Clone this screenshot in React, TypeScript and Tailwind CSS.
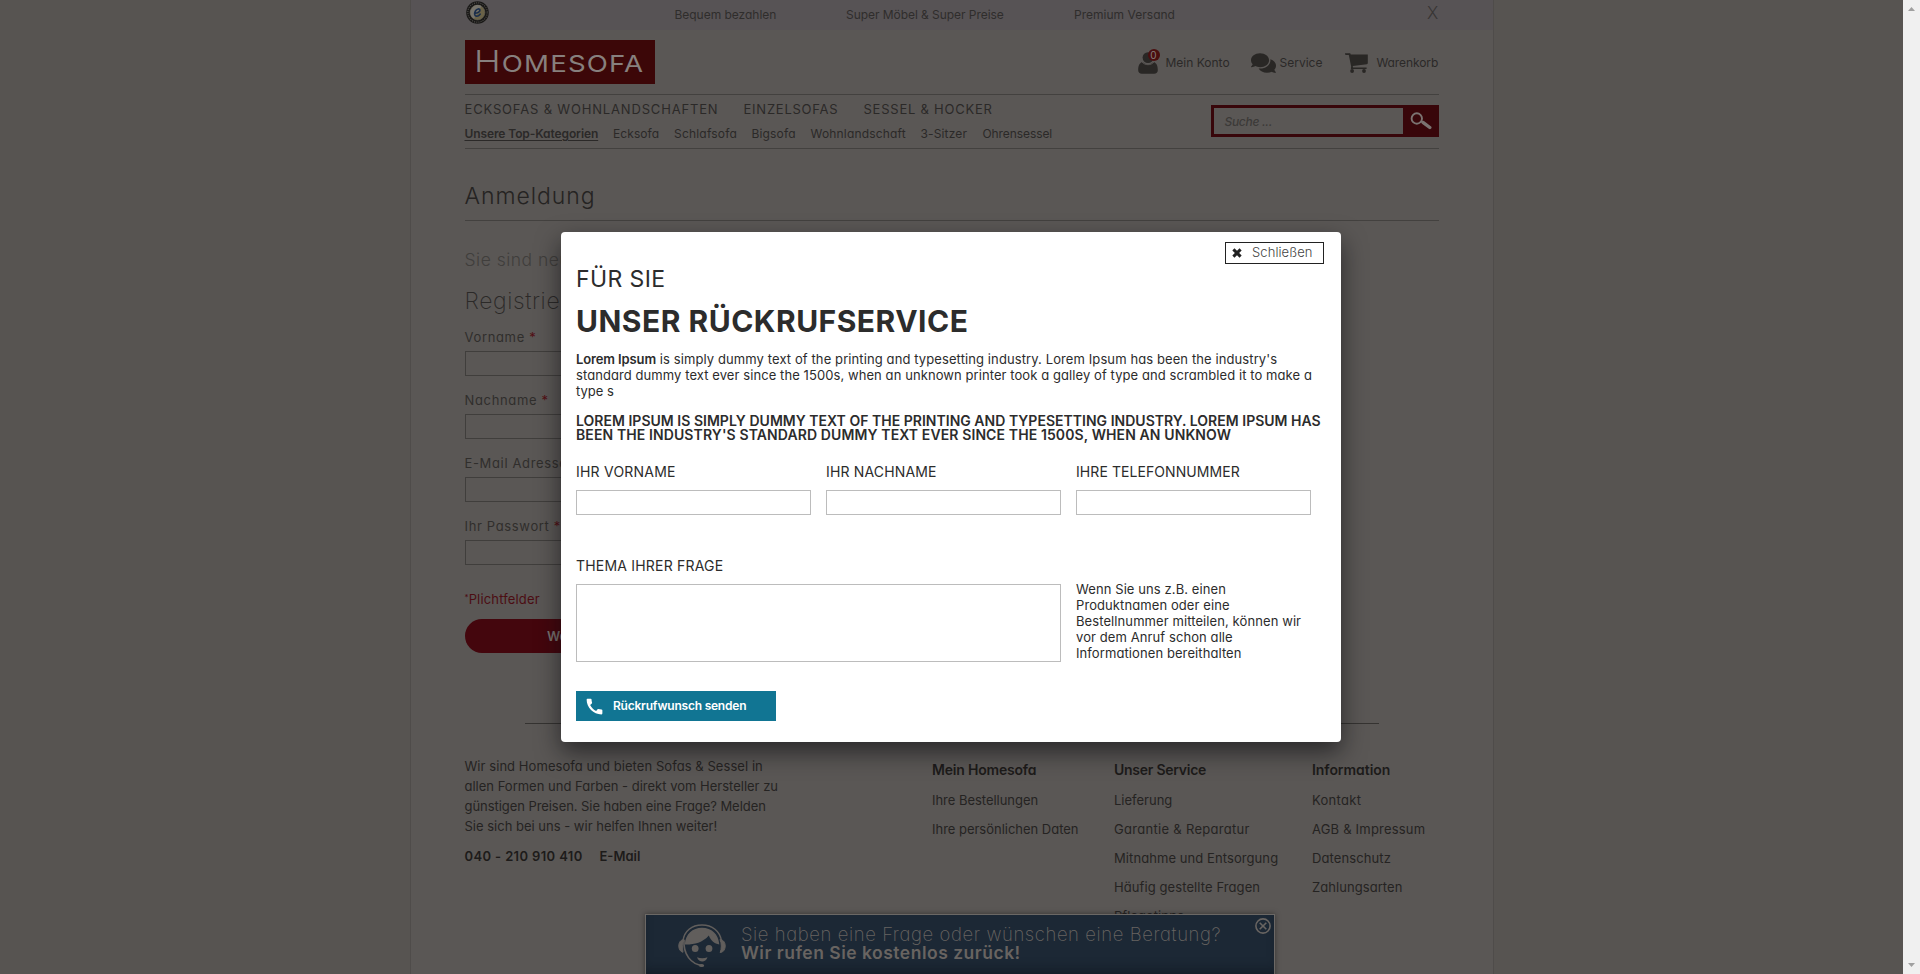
import type { ReactNode } from "react";
import { FaComments } from "react-icons/fa";
import { MdCall } from "react-icons/md";

const topLinks = [
  { label: "Ecksofa", cls: "w-[61px] tracking-[0.08px]" },
  { label: "Schlafsofa", cls: "w-[77.5px] tracking-[0.2px]" },
  { label: "Bigsofa", cls: "w-[59px] tracking-[0.16px]" },
  { label: "Wohnlandschaft", cls: "w-[110px] tracking-[0.18px]" },
  { label: "3-Sitzer", cls: "w-[62px] tracking-[0.14px]" },
  { label: "Ohrensessel", cls: "tracking-[-0.08px]" },
];

const footerColumns = [
  {
    title: "Mein Homesofa",
    titleCls: "tracking-[-0.2px]",
    links: [
      { label: "Ihre Bestellungen", cls: "tracking-[-0.03px]" },
      { label: "Ihre persönlichen Daten", cls: "tracking-[-0.02px]" },
    ],
  },
  {
    title: "Unser Service",
    titleCls: "tracking-[-0.25px]",
    links: [
      { label: "Lieferung", cls: "tracking-[0px]" },
      { label: "Garantie & Reparatur", cls: "tracking-[0.3px]" },
      { label: "Mitnahme und Entsorgung", cls: "tracking-[0.08px]" },
      { label: "Häufig gestellte Fragen", cls: "tracking-[0.09px]" },
      { label: "Pflegetipps", cls: "tracking-[0.05px]" },
    ],
  },
  {
    title: "Information",
    titleCls: "tracking-[-0.05px]",
    links: [
      { label: "Kontakt", cls: "tracking-[0.3px]" },
      { label: "AGB & Impressum", cls: "tracking-[0.2px]" },
      { label: "Datenschutz", cls: "tracking-[0.1px]" },
      { label: "Zahlungsarten", cls: "tracking-[0.06px]" },
    ],
  },
];

function Seal() {
  return (
    <svg viewBox="0 0 23 23" className="h-[23px] w-[23px]">
      <circle cx="11.5" cy="11.5" r="11.3" fill="#1a1918" />
      <circle cx="11.5" cy="11.5" r="9.700" fill="none" stroke="#4b4946" strokeWidth="1.2" strokeDasharray="1 1.2" />
      <circle cx="11.5" cy="11.5" r="7.4" fill="#6a6247" stroke="#5f5c56" strokeWidth="0.6" />
      <path d="M6 7a7 7 0 0 1 9.500-2L8 17.8A7 7 0 0 1 6 7z" fill="#77746c" />
      <path d="M8.6 12.3c3 0 5.600-1.500 5.300-3.300-.4-1.600-3-1.300-4.300.7-1.400 2.200-1.300 5.200.8 5.500 1.500.2 2.800-.8 3.700-2" fill="none" stroke="#1c2f4c" strokeWidth="1.7" strokeLinecap="round" />
    </svg>
  );
}

function UserIcon() {
  return (
    <svg viewBox="0 0 20 22" className="h-[22px] w-5" fill="#292725">
      <circle cx="10" cy="5.600" r="5.400" />
      <path d="M4.600 10c1.300 1.500 3.200 2.400 5.400 2.400s4.100-.9 5.400-2.400c3 .6 4.400 3.600 4.400 8.200 0 2.200-1.500 3.500-3.600 3.500H3.800C1.700 21.700.2 20.400.2 18.200.2 13.600 1.600 10.600 4.600 10z" />
      <path d="M3.800 9.700c1.500 2 3.700 3 6.200 3s4.700-1 6.200-3" fill="none" stroke="#5a5755" strokeWidth="0.9" />
    </svg>
  );
}

function CartIcon() {
  return (
    <svg viewBox="0 0 23 20" className="h-5 w-[23px]" fill="#292725">
      <path d="M0 .3h4.600c.7 0 1 .5 1.100 1.100H22.800v8.700c0 .7-.4 1-1 1.100L7.700 12.900l.4 1.600h13.500v1.500H6.700c-.6 0-.9-.5-.8-1l.3-1.200L3.800 2H.9C.2 2 0 1.500 0 .3z" />
      <circle cx="7.100" cy="18" r="1.900" />
      <circle cx="19" cy="18" r="1.900" />
    </svg>
  );
}

function SearchIcon() {
  return (
    <svg viewBox="0 0 22 18" className="h-[18px] w-[22px]" fill="none" stroke="#7b7371">
      <circle cx="6.800" cy="6.500" r="5.200" strokeWidth="1.900" />
      <path d="M11 9.200l2 1.300" strokeWidth="2" />
      <path d="M13.300 10.600l6.500 4.900" strokeWidth="3.400" strokeLinecap="round" />
    </svg>
  );
}

function AgentIcon() {
  return (
    <svg viewBox="0 0 48 44" className="h-11 w-12" fill="none" stroke="#615e5c">
      <path d="M5 17C6 7 14 1 24 1s18 6 19.500 16" strokeWidth="1.600" />
      <path d="M6 16c-.8 14 6.500 24.500 19 25.500" strokeWidth="1.600" />
      <path d="M42 15.500c4 .5 5.200 3.500 5.200 6.500s-1.500 6.300-5 6.600c1.500-4.100 1.500-9 -.2-13.100zM6 15.500C2 16 .8 19 .8 22s1.300 5.500 4.200 6.300C4.300 24 4.500 19 6 15.500z" fill="#615e5c" />
      <path d="M6.800 20.500C7.500 10 14.500 3.800 24 3.800S40.500 10 41.300 20.500C36.500 19.500 33 17 30.800 11.500 24.500 19 15 20.800 6.800 20.500z" fill="#615e5c" stroke="none" />
      <ellipse cx="17.200" cy="24.500" rx="3.400" ry="3.600" fill="#615e5c" stroke="none" />
      <ellipse cx="31" cy="24.500" rx="3.400" ry="3.600" fill="#615e5c" stroke="none" />
      <path d="M19 33.300c3.500 1.300 7 1.300 10.500 0-1 3-3 4.200-5.200 4.200S20 36.300 19 33.300z" fill="#615e5c" stroke="none" />
      <ellipse cx="23.600" cy="41.500" rx="2.600" ry="1.500" fill="#615e5c" stroke="none" />
    </svg>
  );
}

function Field({ label }: { label: string }) {
  return (
    <div className="flex w-[206px] flex-col gap-1">
      <label className="h-5 text-[13px] leading-5 tracking-[0.65px] whitespace-nowrap text-[#302e2c]">
        {label} <span className="text-[#520f14]">*</span>
      </label>
      <div className="h-[25px] border border-[#403e3c]" />
    </div>
  );
}

function ModalField({ label, cls }: { label: string; cls: string }) {
  return (
    <div className="flex w-[235px] flex-col gap-2">
      <label className={cls}>{label}</label>
      <input className="h-[25px] border border-[#bcbcbc] bg-white" />
    </div>
  );
}

function HeaderItem({ icon, children }: { icon: ReactNode; children: ReactNode }) {
  return (
    <div className="flex items-center text-[12px] leading-[45px]">
      {icon}
      {children}
    </div>
  );
}

function Shop() {
  return (
    <div className="mx-auto h-full w-[1084px] border-x border-[#4f4c4a] bg-[#5a5755]">
      <div className="grid h-[30px] grid-cols-[209px_171.500px_228px_353px_auto] bg-[#575355] pl-[55px] text-[12px] leading-[30px] text-[#2f2d2c]">
        <div className="pt-px"><Seal /></div>
        <span className="tracking-[-0.03px]">Bequem bezahlen</span>
        <span className="tracking-[-0.05px]">Super Möbel &amp; Super Preise</span>
        <span className="tracking-[0.02px]">Premium Versand</span>
        <span className="text-[17px] leading-[27px] font-light text-[#373534]">X</span>
      </div>

      <div className="px-[54px]">
        <div className="flex h-16 items-start justify-between pt-[10px]">
          <div className="flex h-11 w-[190px] items-end bg-[#3c0708] pl-[9px] text-[#87807e]">
            <div className="flex origin-left scale-x-[1.200] items-baseline leading-[42px] whitespace-nowrap">
              <span className="relative top-px text-[30px] font-light">H</span>
              <span className="relative top-px pl-px text-[23px] tracking-[0.950px]">OMESOFA</span>
            </div>
          </div>
          <div className="flex h-[45px] text-[#2b2928]">
            <HeaderItem
              icon={
                <span className="relative mr-2 block">
                  <UserIcon />
                  <span className="absolute -top-[3px] left-[10px] flex h-3 w-3 items-center justify-center rounded-full bg-[#4a0e0f] text-[10px] leading-3 text-[#857c7a]">0</span>
                </span>
              }
            >
              <span className="w-[85px]">Mein Konto</span>
            </HeaderItem>
            <HeaderItem icon={<FaComments className="mr-1 h-6 w-[25px] text-[#292725]" />}>
              <span className="w-[65px]">Service</span>
            </HeaderItem>
            <HeaderItem icon={<span className="mr-[9px]"><CartIcon /></span>}>
              <span className="w-[62px] tracking-[-0.1px]">Warenkorb</span>
            </HeaderItem>
          </div>
        </div>

        <div className="flex h-[55px] justify-between border-y border-[#43413f]">
          <div className="flex flex-col gap-[5px] pt-1 whitespace-nowrap text-[#2b2928]">
            <div className="flex h-5 text-[13px] leading-5">
              <span className="w-[279px] tracking-[0.83px]">ECKSOFAS &amp; WOHNLANDSCHAFTEN</span>
              <span className="w-[120px] tracking-[0.76px]">EINZELSOFAS</span>
              <span className="tracking-[0.77px]">SESSEL &amp; HOCKER</span>
            </div>
            <div className="flex h-5 text-[12px] leading-5">
              <span className="w-[148.500px] font-semibold tracking-[-0.1px] underline underline-offset-2">Unsere Top-Kategorien</span>
              {topLinks.map((l) => (
                <span key={l.label} className={l.cls}>{l.label}</span>
              ))}
            </div>
          </div>
          <div className="mt-[10px] flex h-8 w-[228px] border-[3px] border-[#38060a] bg-[#38060a]">
            <div className="w-[189px] bg-[#5a5755] pl-[11px] text-[12px] leading-[28px] font-medium tracking-[-0.3px] text-[#3c3a38] italic">Suche ...</div>
            <div className="flex flex-1 items-center justify-center pl-[3px]"><SearchIcon /></div>
          </div>
        </div>

        <h1 className="h-[72px] border-b border-[#43413f] pt-8 text-[23px] leading-[30px] font-light tracking-[0.950px] text-[#252322]">Anmeldung</h1>

        <div className="flex h-[502px] flex-col items-start pt-[29px]">
          <p className="h-5 text-[17.500px] leading-5 font-light tracking-[0.500px] text-[#403e3c]">Sie sind neu hier?</p>
          <h2 className="mt-4 h-[30px] text-[23px] leading-[30px] font-extralight tracking-[0.600px] text-[#2b2928]">Registrieren</h2>
          <div className="mt-[11px] flex flex-col gap-[14px]">
            <Field label="Vorname" />
            <Field label="Nachname" />
            <Field label="E-Mail Adresse" />
            <Field label="Ihr Passwort" />
          </div>
          <p className="mt-6 h-5 text-[13px] leading-5 tracking-[0.15px] text-[#4c0d13]">
            <span className="relative -top-1 text-[8px]">*</span>Plichtfelder
          </p>
          <div className="mt-[10px] h-[34px] w-[206px] rounded-full bg-[#44060d] text-center text-[13px] leading-[34px] font-semibold text-[#77706e]">Weiter</div>
        </div>

        <div className="mx-[60px] h-px bg-[#353331]" />

        <div className="grid grid-cols-[467.500px_182px_198px_auto] text-[13px] whitespace-nowrap text-[#252322]">
          <div className="pt-8 leading-5">
            <p className="tracking-[0.06px]">Wir sind Homesofa und bieten Sofas &amp; Sessel in</p>
            <p>allen Formen und Farben - direkt vom Hersteller zu</p>
            <p className="tracking-[-0.06px]">günstigen Preisen. Sie haben eine Frage? Melden</p>
            <p>Sie sich bei uns - wir helfen Ihnen weiter!</p>
            <p className="mt-[10px] flex font-semibold text-[#1d1b1a]">
              <span className="w-[135px] tracking-[0.37px]">040 - 210 910 410</span>
              <span>E-Mail</span>
            </p>
          </div>
          {footerColumns.map((c) => (
            <div key={c.title} className="pt-9">
              <h3 className={"mb-[6px] h-5 text-[14px] leading-5 font-semibold text-[#1d1b1a] " + c.titleCls}>{c.title}</h3>
              {c.links.map((l) => (
                <p key={l.label} className={"h-[29px] leading-[29px] " + l.cls}>{l.label}</p>
              ))}
            </div>
          ))}
        </div>
      </div>
    </div>
  );
}

function CallbackBanner() {
  return (
    <div className="absolute top-[914px] left-[645px] flex h-[70px] w-[630px] border border-[#6b6865] bg-[#1c2835] text-[#686461] shadow-[0_0_5px_rgba(20,18,16,0.5),inset_0_-18px_14px_-8px_rgba(8,12,16,0.6)]">
      <div className="mt-[9px] ml-8"><AgentIcon /></div>
      <div className="ml-[15px] whitespace-nowrap">
        <p className="pt-[10px] text-[18.500px] leading-[19px] font-extralight tracking-[0.58px]">Sie haben eine Frage oder wünschen eine Beratung?</p>
        <p className="text-[17.500px] leading-[18px] font-semibold tracking-[0.5px]">Wir rufen Sie kostenlos zurück!</p>
      </div>
      <svg viewBox="0 0 16 16" className="absolute top-[3px] right-[3px] h-4 w-4" fill="none" stroke="#686461" strokeWidth="1.600">
        <circle cx="8" cy="8" r="7.100" />
        <path d="M4.700 4.700l6.600 6.600M11.300 4.700l-6.600 6.600" />
      </svg>
    </div>
  );
}

function CallbackModal() {
  return (
    <div className="absolute top-[232px] left-[561px] h-[510px] w-[780px] rounded bg-white pt-8 pl-[15px] whitespace-nowrap text-[#2c2c2c] shadow-[0_10px_25px_rgba(10,10,14,0.6)]">
      <button className="absolute top-[10px] right-[17px] flex h-[22px] w-[99px] items-center border border-[#222222] pl-[6px] text-[13px] font-light tracking-[0.08px] text-[#444444]">
        <svg viewBox="0 0 10 10" className="mr-[10px] h-[10px] w-[10px]" stroke="#222222" strokeWidth="3">
          <path d="M1.400 1.400l7.200 7.200M8.600 1.400L1.400 8.600" />
        </svg>
        Schließen
      </button>
      <p className="h-[30px] text-[23px] leading-[30px] tracking-[0.400px]">FÜR SIE</p>
      <h2 className="mt-[7px] h-10 text-[30px] leading-10 font-bold tracking-[0.500px]">UNSER RÜCKRUFSERVICE</h2>
      <p className="mt-[10px] text-[13px] leading-4">
        <b className="font-semibold tracking-[-0.12px]">Lorem Ipsum</b>
        <span className="tracking-[0.1px]"> is simply dummy text of the printing and typesetting industry. Lorem Ipsum has been the industry's</span>
        <br />
        <span className="tracking-[0.08px]">standard dummy text ever since the 1500s, when an unknown printer took a galley of type and scrambled it to make a</span>
        <br />
        type s
      </p>
      <p className="mt-[15px] text-[14px] leading-[14px] font-semibold">
        <span className="tracking-[0.02px]">LOREM IPSUM IS SIMPLY DUMMY TEXT OF THE PRINTING AND TYPESETTING INDUSTRY. LOREM IPSUM HAS</span>
        <br />
        <span className="tracking-[0.11px]">BEEN THE INDUSTRY'S STANDARD DUMMY TEXT EVER SINCE THE 1500S, WHEN AN UNKNOW</span>
      </p>
      <div className="mt-5 flex gap-[15px] text-[14px] leading-5">
        <ModalField label="IHR VORNAME" cls="h-5 tracking-[0.22px]" />
        <ModalField label="IHR NACHNAME" cls="h-5 tracking-[0.16px]" />
        <ModalField label="IHRE TELEFONNUMMER" cls="h-5 tracking-[0.07px]" />
      </div>
      <label className="mt-[41px] block h-5 text-[14px] leading-5 tracking-[0.2px]">THEMA IHRER FRAGE</label>
      <div className="mt-[5px] flex gap-[15px]">
        <textarea className="mt-[3px] h-[78px] w-[485px] resize-none border border-[#bcbcbc] bg-white" />
        <p className="text-[13px] leading-4 tracking-[0.09px]">
          Wenn Sie uns z.B. einen
          <br />
          Produktnamen oder eine
          <br />
          Bestellnummer mitteilen, können wir
          <br />
          vor dem Anruf schon alle
          <br />
          Informationen bereithalten
        </p>
      </div>
      <button className="mt-[29px] flex h-[30px] w-[200px] items-center bg-[#117593] pl-2 text-[12px] font-semibold tracking-[-0.22px] text-white">
        <MdCall className="mr-2 h-[21px] w-[21px] shrink-0" />
        Rückrufwunsch senden
      </button>
    </div>
  );
}

export default function App() {
  return (
    <div className="flex h-[974px] w-[1920px] overflow-hidden bg-[#575451] font-['Inter',sans-serif] [font-feature-settings:'cv11']">
      <main className="relative h-full w-[1903px] overflow-hidden">
        <Shop />
        <CallbackBanner />
        <CallbackModal />
      </main>
      <div className="flex w-[17px] flex-col items-center justify-between bg-[#f0f0f0] py-[7px]">
        <svg viewBox="0 0 7 4" className="h-1 w-[7px]" fill="#a0a0a0"><path d="M3.500 0L7 4H0z" /></svg>
        <svg viewBox="0 0 7 4" className="h-1 w-[7px]" fill="#a0a0a0"><path d="M3.500 4L7 0H0z" /></svg>
      </div>
    </div>
  );
}
